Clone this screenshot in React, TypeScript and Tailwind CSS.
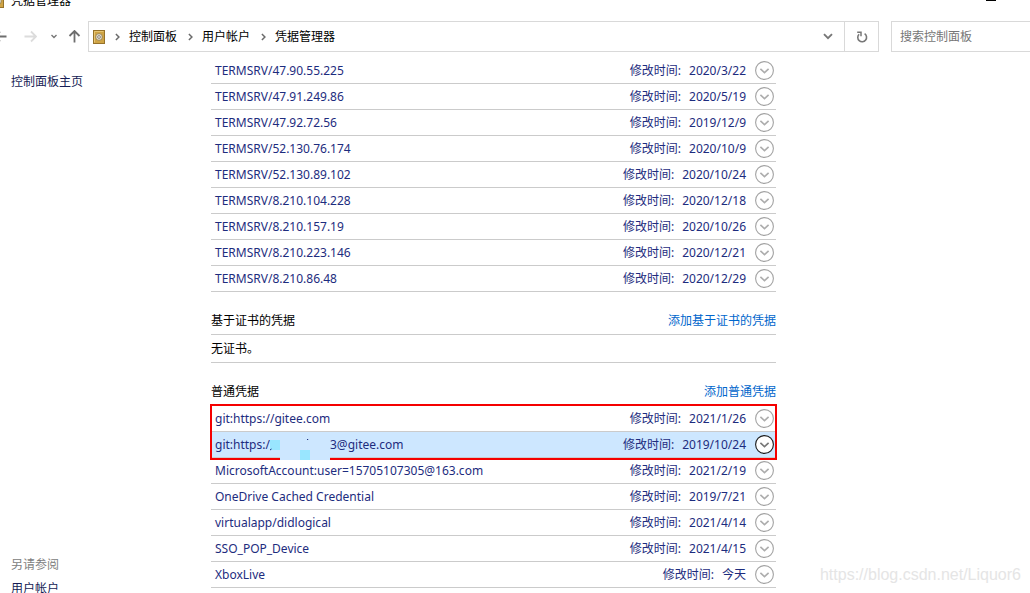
type Credential = { name: string; modified: string; active?: boolean };

const windowsCredentials: Credential[] = [
  { name: "TERMSRV/47.90.55.225", modified: "2020/3/22" },
  { name: "TERMSRV/47.91.249.86", modified: "2020/5/19" },
  { name: "TERMSRV/47.92.72.56", modified: "2019/12/9" },
  { name: "TERMSRV/52.130.76.174", modified: "2020/10/9" },
  { name: "TERMSRV/52.130.89.102", modified: "2020/10/24" },
  { name: "TERMSRV/8.210.104.228", modified: "2020/12/18" },
  { name: "TERMSRV/8.210.157.19", modified: "2020/10/26" },
  { name: "TERMSRV/8.210.223.146", modified: "2020/12/21" },
  { name: "TERMSRV/8.210.86.48", modified: "2020/12/29" },
];

const gitCredentials: Credential[] = [
  { name: "git:https://gitee.com", modified: "2021/1/26" },
  { name: "3@gitee.com", modified: "2019/10/24", active: true },
];

const genericCredentials: Credential[] = [
  { name: "MicrosoftAccount:user=15705107305@163.com", modified: "2021/2/19" },
  { name: "OneDrive Cached Credential", modified: "2019/7/21" },
  { name: "virtualapp/didlogical", modified: "2021/4/14" },
  { name: "SSO_POP_Device", modified: "2021/4/15" },
  { name: "XboxLive", modified: "今天" },
];

const crumbs = ["控制面板", "用户帐户", "凭据管理器"];

function SafeIcon() {
  return (
    <svg width="12" height="14" viewBox="0 0 12 14" className="shrink-0" aria-hidden="true">
      <rect x="0.5" y="0.5" width="11" height="13" fill="#cfa445" stroke="#96722a" />
      <path d="M1.5 12.5V1.5H10.5" fill="none" stroke="#e6c572" />
      <circle cx="6" cy="7" r="3.4" fill="#e2ddcd" stroke="#94793f" strokeWidth="0.8" />
      <circle cx="6" cy="7" r="1.4" fill="#f3f0e6" stroke="#77706a" strokeWidth="0.8" />
    </svg>
  );
}

function CrumbChevron() {
  return (
    <svg width="5" height="8" viewBox="0 0 5 8" className="shrink-0" aria-hidden="true">
      <path d="M0.9 1L3.9 4L0.9 7" fill="none" stroke="#6b6b6b" strokeWidth="1.5" />
    </svg>
  );
}

function Arrow({ className, turn }: { className: string; turn: string }) {
  return (
    <svg width="13" height="13" viewBox="0 0 13 13" className={className} aria-hidden="true">
      <path d="M0.5 6.5H12M7 1.5L12 6.5L7 11.5" fill="none" stroke="currentColor" strokeWidth="1.8" transform={turn} />
    </svg>
  );
}

function ExpandIcon({ active }: { active?: boolean }) {
  return (
    <svg width="19" height="19" viewBox="0 0 19 19" aria-hidden="true">
      <circle cx="9.5" cy="9.5" r="8.9" fill="#ffffff" stroke={active ? "#1c1c1c" : "#a3a3a3"} strokeWidth="1.1" />
      <path d="M5.4 7.8L9.5 11.7L13.6 7.8" fill="none" stroke={active ? "#777777" : "#adadad"} strokeWidth="1.6" />
    </svg>
  );
}

function MaskedName({ name }: { name: string }) {
  return (
    <span className="flex">
      <span className="w-[55px]">git:https:/</span>
      <svg width="60" height="28" viewBox="0 0 60 28" className="absolute top-0 left-[59px] z-20" aria-hidden="true">
        <rect x="10" width="50" height="28" fill="#cde7ff" />
        <rect y="8" width="10" height="10" fill="#99e6ff" />
        <rect x="30" y="18" width="10" height="10" fill="#99e6ff" />
        <path d="M37 7.5H38.2M0 18L1.5 17" stroke="#1f2f80" fill="none" />
      </svg>
      <span className="ml-[60px]">{name}</span>
    </span>
  );
}

function CredentialList({ items }: { items: Credential[] }) {
  return (
    <ul>
      {items.map((item) => (
        <li
          key={item.name}
          className={
            "relative flex h-[26px] items-center border-b border-[#cbcbcb] pr-0.5 pl-1 text-[#1d2c7e] " +
            (item.active ? "bg-[#cde7ff]" : "")
          }
        >
          {item.active ? <MaskedName name={item.name} /> : <span>{item.name}</span>}
          <span className="ml-auto flex gap-2">
            <span>修改时间:</span>
            <span>{item.modified}</span>
          </span>
          <button type="button" aria-label={"展开 " + item.name} className="ml-[9px] shrink-0">
            <ExpandIcon active={item.active} />
          </button>
        </li>
      ))}
    </ul>
  );
}

export default function App() {
  return (
    <div className="relative flex h-screen flex-col overflow-hidden bg-white font-['Noto_Sans','Noto_Sans_CJK_SC',sans-serif] text-[12px] leading-4 text-black">
      <header className="shrink-0">
        <div className="flex h-[21px] items-start overflow-hidden">
          <div className="-mt-[7px] -ml-2 flex items-center gap-[7px]">
            <SafeIcon />
            <h1>凭据管理器</h1>
          </div>
          <button type="button" aria-label="最小化" className="mr-[34px] ml-auto h-px w-2.5 bg-black" />
        </div>
        <div className="flex h-[31px]">
          <nav aria-label="导航" className="flex w-[88px] shrink-0 items-center">
            <button type="button" aria-label="后退" className="-ml-1.5">
              <Arrow className="text-[#6e6e6e]" turn="rotate(180 6.5 6.5)" />
            </button>
            <button type="button" aria-label="前进" className="ml-[17px]">
              <Arrow className="text-[#dcdcdc]" turn="" />
            </button>
            <button type="button" aria-label="最近位置" className="ml-3.5">
              <svg width="6" height="5" viewBox="0 0 6 5" aria-hidden="true">
                <path d="M0.5 1L3 3.5L5.5 1" fill="none" stroke="#777777" strokeWidth="1.4" />
              </svg>
            </button>
            <button type="button" aria-label="向上" className="ml-[11px]">
              <Arrow className="text-[#6e6e6e]" turn="rotate(-90 6.5 6.5)" />
            </button>
          </nav>
          <div className="flex min-w-0 flex-1 border border-[#d9d9d9]">
            <div className="flex flex-1 items-center pl-1">
              <SafeIcon />
              {crumbs.map((crumb) => (
                <span key={crumb} className="flex items-center">
                  <span className="pr-2 pl-2.5">
                    <CrumbChevron />
                  </span>
                  <a href="#" className="px-px">
                    {crumb}
                  </a>
                </span>
              ))}
            </div>
            <button type="button" aria-label="历史记录" className="flex w-8 items-center justify-center">
              <svg width="10" height="7" viewBox="0 0 10 7" aria-hidden="true">
                <path d="M1 1.2L5 5.2L9 1.2" fill="none" stroke="#777777" strokeWidth="1.9" />
              </svg>
            </button>
            <button type="button" aria-label="刷新" className="flex w-[34px] items-center justify-center border-l border-[#d9d9d9]">
              <svg width="12" height="12" viewBox="0 0 12 12" aria-hidden="true">
                <path d="M8.6 2.7A4.4 4.4 0 1 1 3.1 3.2" fill="none" stroke="#777777" strokeWidth="1.6" />
                <path d="M1.2 1.2H5V5.2" fill="none" stroke="#777777" strokeWidth="1.5" />
              </svg>
            </button>
          </div>
          <input
            type="search"
            aria-label="搜索控制面板"
            placeholder="搜索控制面板"
            className="ml-3 w-[139px] border border-r-0 border-[#d9d9d9] px-2 pt-px outline-none placeholder:text-[#767676]"
          />
        </div>
      </header>

      <div className="flex min-h-0 flex-1">
        <aside className="flex w-[211px] shrink-0 flex-col pt-[22px] pl-[11px]">
          <a href="#" className="text-[#151c55]">
            控制面板主页
          </a>
          <div className="mt-auto -mb-1 flex flex-col gap-2">
            <h2 className="text-[#808080]">另请参阅</h2>
            <a href="#" className="text-[#151c55]">
              用户帐户
            </a>
          </div>
        </aside>

        <main className="mr-[254px] min-w-0 flex-1 pt-1.5">
          <CredentialList items={windowsCredentials} />

          <section>
            <div className="flex h-[43px] items-end justify-between border-b border-[#cbcbcb] pb-[5px]">
              <h2>基于证书的凭据</h2>
              <a href="#" className="text-[#0066cc]">
                添加基于证书的凭据
              </a>
            </div>
            <p className="flex h-7 items-center border-b border-[#cbcbcb]">无证书。</p>
          </section>

          <section>
            <div className="flex h-[43px] items-end justify-between pb-1.5">
              <h2>普通凭据</h2>
              <a href="#" className="text-[#0066cc]">
                添加普通凭据
              </a>
            </div>
            <div className="relative">
              <CredentialList items={gitCredentials} />
              <div className="pointer-events-none absolute -inset-x-px -top-0.5 -bottom-0.5 z-10 border-2 border-[#f50000]" />
            </div>
            <CredentialList items={genericCredentials} />
          </section>
        </main>
      </div>

      <span className="absolute right-[9px] bottom-2.5 font-['Liberation_Sans',sans-serif] text-[16px] leading-4 text-[#e5e5e5]">
        https://blog.csdn.net/Liquor6
      </span>
    </div>
  );
}
